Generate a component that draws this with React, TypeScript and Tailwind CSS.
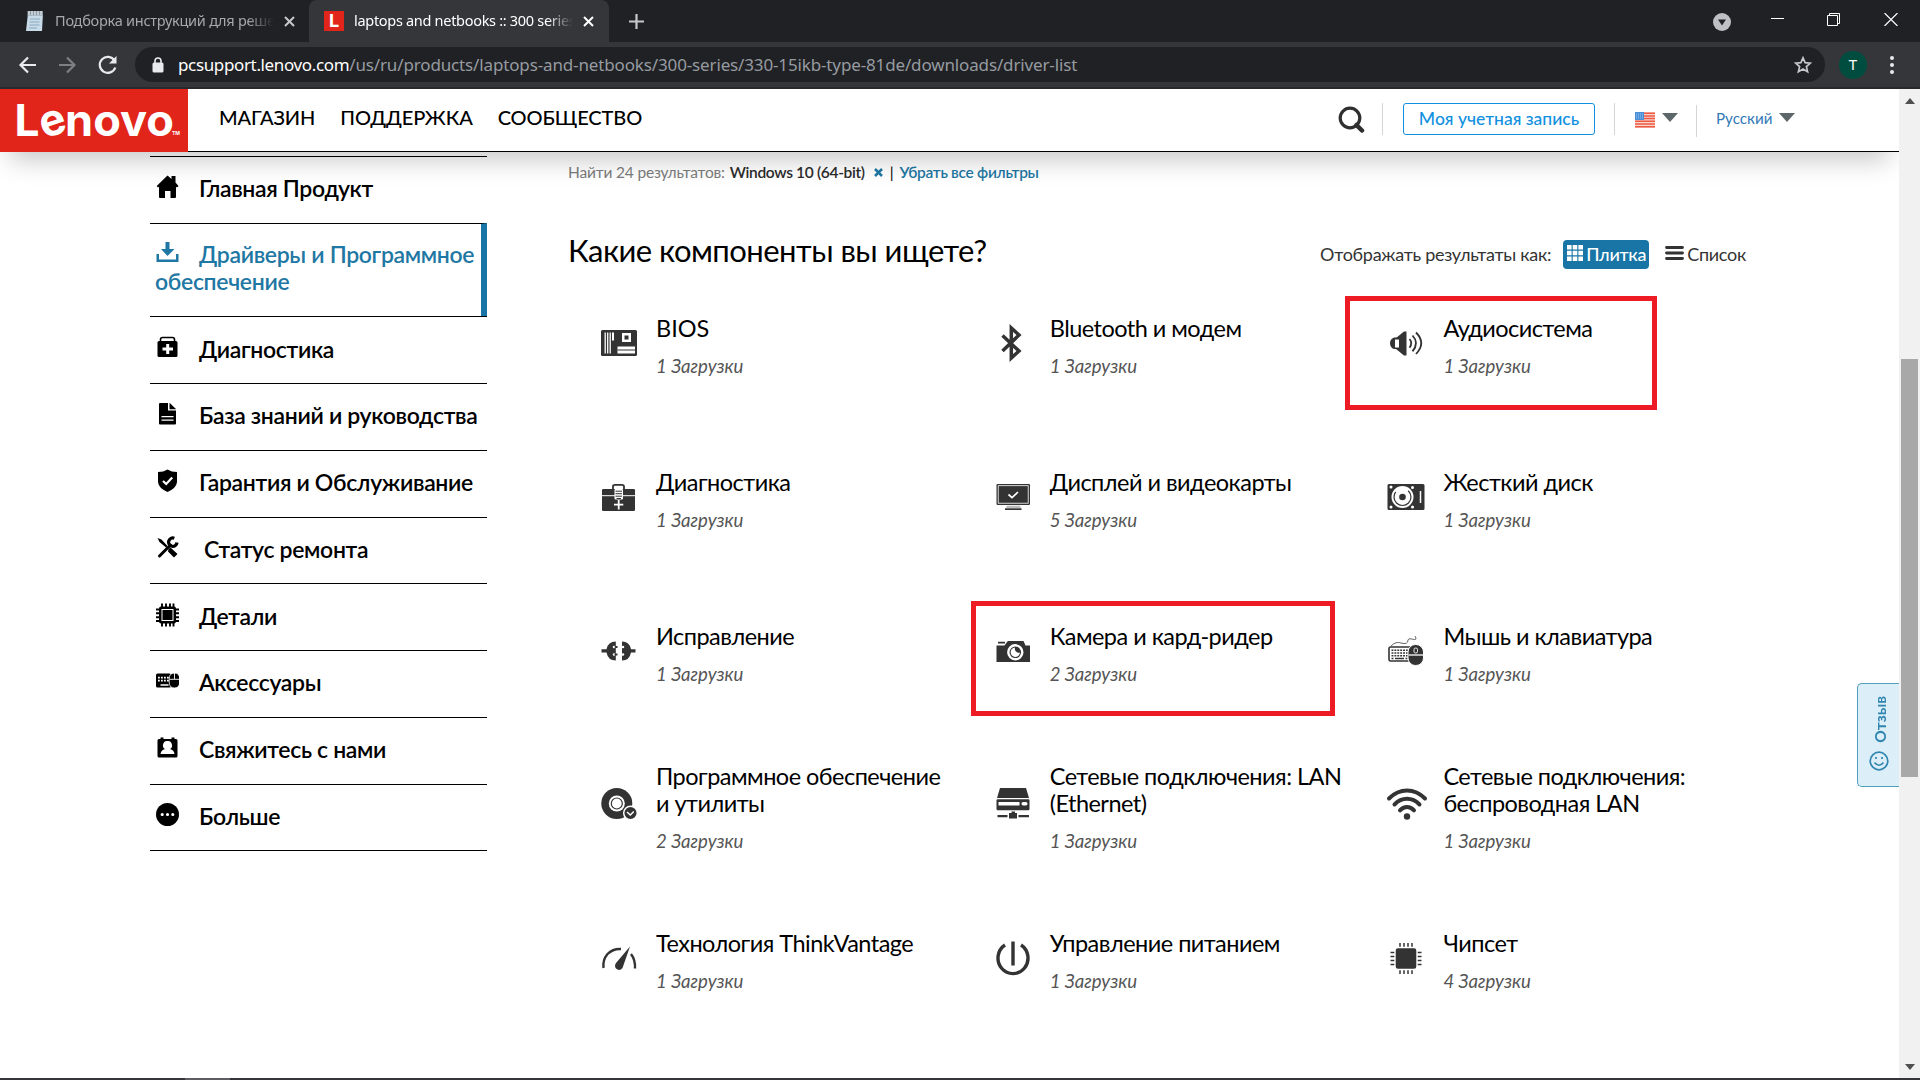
import type { ReactNode } from "react";
import clsx from "clsx";

interface MenuItem {
    label: string;
    icon: ReactNode;
    active?: boolean;
    indent?: boolean;
}

interface Category {
    title: string;
    count: number;
    icon: ReactNode;
    frame?: string;
}

const menu: MenuItem[] = [
    {
        label: "Главная Продукт",
        icon: (
            <path d="M12 0.500 L16 4 V1 H20 V7.500 L23 11 L21.500 12.500 L20.500 11.700 V22 Q20.500 23 19.500 23 H15 V16 H9.500 V23 H4.500 Q3.500 23 3.500 22 V11.700 L2.500 12.500 L1.200 11 Z" />
        ),
    },
    {
        label: "Драйверы и Программное обеспечение",
        active: true,
        icon: (
            <>
                <path d="M10 1 H14 V8 H19 L12 15 L5.500 8 H10 Z" />
                <path d="M1 13 H3.500 V18.500 H20.500 V13 H23 V21 H1 Z" />
            </>
        ),
    },
    {
        label: "Диагностика",
        icon: (
            <>
                <path d="M5 6.500 V3.500 Q5 1.500 7 1.500 H17 Q19 1.500 19 3.500 V6.500" fill="none" stroke="currentColor" strokeWidth="1.6" />
                <rect x="2" y="5" width="20" height="16" rx="1.500" />
                <path d="M10.700 8 H13.700 V11.500 H17.500 V14.500 H13.700 V18 H10.700 V14.500 H7 V11.500 H10.700 Z" fill="#fff" />
            </>
        ),
    },
    {
        label: "База знаний и руководства",
        icon: (
            <>
                <path d="M4.500 1 H12.500 V8.500 H20.500 V21.500 Q20.500 22.500 19.500 22.500 H4.500 Q3.500 22.500 3.500 21.500 V2 Q3.500 1 4.500 1 Z" />
                <path d="M14 0.800 L20.700 7.200 H14 Z" />
                <path d="M6 14.700 H18 M6 18.200 H18" stroke="#fff" strokeWidth="1.200" />
            </>
        ),
    },
    {
        label: "Гарантия и Обслуживание",
        icon: (
            <>
                <path d="M12 0.500 Q16 3 21.500 3 V13 Q21 19 12 23 Q3 19 2.500 13 V3 Q8 3 12 0.500 Z" />
                <path d="M7.500 12 L10.700 15 L16.700 8.500" fill="none" stroke="#fff" strokeWidth="2.200" />
            </>
        ),
    },
    {
        label: "Статус ремонта",
        indent: true,
        icon: (
            <>
                <path d="M2 2 L6 3.500 L12 10 L10.500 11.500 L4 6 Z M13 13 L15 11.500 L22 18 L18.500 21.500 L12.500 15.500 Z" />
                <path d="M4 20 L15 9" stroke="currentColor" strokeWidth="3" strokeLinecap="round" />
                <path d="M18.800 2.200 A4.200 4.200 0 1 0 21.500 6.500" fill="none" stroke="currentColor" strokeWidth="3.200" />
            </>
        ),
    },
    {
        label: "Детали",
        icon: (
            <>
                <path d="M6.500 0.500 V23.500 M10.500 0.500 V23.500 M14.500 0.500 V23.500 M18 0.500 V23.500 M0.500 6.500 H23.500 M0.500 10.300 H23.500 M0.500 14.200 H23.500 M0.500 18 H23.500" stroke="currentColor" strokeWidth="1.900" />
                <rect x="3.500" y="3.500" width="17" height="17" rx="2" />
                <rect x="6.500" y="6.500" width="11" height="11" fill="none" stroke="#fff" strokeWidth="1" />
            </>
        ),
    },
    {
        label: "Аксессуары",
        icon: (
            <>
                <rect x="0.500" y="4.500" width="15" height="14" rx="1.500" />
                <path d="M2.500 8.700 H14.500 M2.500 11.700 H14.500" stroke="#fff" strokeWidth="1.700" strokeDasharray="1.800 1.200" />
                <path d="M5 16 H13" stroke="#fff" strokeWidth="1.500" />
                <path d="M13.700 10 Q13.700 4 19 4 Q24.200 4 24.200 10 V13 Q24.200 19 19 19 Q13.700 19 13.700 13 Z" stroke="#fff" strokeWidth="0.800" />
                <path d="M19 4 V10 M14 10.300 H24" stroke="#fff" strokeWidth="0.900" />
            </>
        ),
    },
    {
        label: "Свяжитесь с нами",
        icon: (
            <>
                <path d="M5 1.500 H8 V3 H16 V1.500 H19 V3 H20.500 Q22 3 22 4.500 V20 Q22 21.500 20.500 21.500 H3.500 Q2 21.500 2 20 V4.500 Q2 3 3.500 3 H5 Z" />
                <path d="M12 5 A4 4.300 0 0 1 14.500 13 Q18.500 14 19 18 H5 Q5.500 14 9.500 13 A4 4.300 0 0 1 12 5 Z" fill="#fff" />
            </>
        ),
    },
    {
        label: "Больше",
        icon: (
            <>
                <circle cx="12" cy="11.500" r="11.500" />
                <path d="M6.700 11.500 h0.010 M12 11.500 h0.010 M17.300 11.500 h0.010" stroke="#fff" strokeWidth="3.200" strokeLinecap="round" />
            </>
        ),
    },
];

const categories: Category[] = [
    {
        title: "BIOS",
        count: 1,
        icon: (
            <>
                <rect x="2" y="7" width="36" height="26" rx="1.500" />
                <path d="M6.200 9.500 V30.500 M8.700 9.500 V30.500 M11.200 9.500 V30.500" stroke="#fff" strokeWidth="1.300" />
                <path d="M13 9.500 h2 v8 h-2 z M23 10 h9 v9 h-9 z M18.500 23.500 h17.500 v7 h-17.500 z" fill="#fff" />
                <path d="M25.500 12.500 h4 v4 h-4 z" />
                <path d="M18.500 27 h17.500" stroke="#333" strokeWidth="1" />
            </>
        ),
    },
    {
        title: "Bluetooth и модем",
        count: 1,
        icon: <path d="M9.500 12.500 L26 28 L18.300 35 V5 L26 12 L9.500 28" fill="none" stroke="#333" strokeWidth="3.500" />,
    },
    {
        title: "Аудиосистема",
        count: 1,
        frame: "left-[-23px] top-[25px] w-[312px] h-[114px]",
        icon: (
            <>
                <path d="M20.500 8.500 V32.500 H18 L10 26 V15 L18 8.500 Z" />
                <path d="M8 14.500 H13.500 V26 H8 Q4 24.500 4 20.200 Q4 16 8 14.500 Z" />
                <path d="M9 16.500 H13 V24.500 H9 Z" fill="#fff" />
                <path d="M23.500 16 Q27 20 23.500 24.700 M26.500 12.500 Q33.500 20 26.500 28.300 M30 9.500 Q40.500 20 30 31" fill="none" stroke="#333" strokeWidth="1.800" />
            </>
        ),
    },
    {
        title: "Диагностика",
        count: 1,
        icon: (
            <>
                <path d="M14 12 V9.500 Q14 7.800 16 7.800 H23 Q25 7.800 25 9.500 V12" fill="none" stroke="#333" strokeWidth="1.800" />
                <rect x="3" y="12" width="33" height="22" rx="1.300" />
                <path d="M3 18.700 H36" stroke="#fff" strokeWidth="1" />
                <rect x="15.500" y="12" width="8.500" height="10.500" rx="1" fill="#fff" />
                <path d="M16.500 14.200 H23 M16.500 16.700 H23 M16.500 19.200 H23 M17.500 21.500 H22" stroke="#333" strokeWidth="1" />
                <path d="M19.700 23 V32.500 M15 27.700 H24.300" stroke="#fff" strokeWidth="1.800" />
            </>
        ),
    },
    {
        title: "Дисплей и видеокарты",
        count: 5,
        icon: (
            <>
                <rect x="3.500" y="7" width="33.500" height="21" rx="1.200" />
                <rect x="5.200" y="8.700" width="30" height="17.500" fill="none" stroke="#fff" strokeWidth="0.800" />
                <path d="M15.500 17.500 L19 20.700 L25 15" fill="none" stroke="#fff" strokeWidth="1.700" />
                <path d="M14 28.700 H27 L28 31 H13 Z" fill="#bbb" />
                <path d="M12 31.300 H28.500 V33 H12 Z" />
            </>
        ),
    },
    {
        title: "Жесткий диск",
        count: 1,
        icon: (
            <>
                <rect x="1.500" y="7" width="37" height="26" rx="1.500" />
                <circle cx="16.500" cy="20" r="11" fill="#fff" />
                <circle cx="16.500" cy="20" r="8.500" fill="none" stroke="#333" strokeWidth="1.200" strokeDasharray="40 14" strokeDashoffset="8" />
                <circle cx="16.500" cy="20" r="3.300" />
                <path d="M34.500 14 V26" stroke="#fff" strokeWidth="1.500" />
                <path d="M5 10 h.01 M5 30 h.01 M26.500 10.500 h.01 M26.500 30 h.01" stroke="#fff" strokeWidth="3" strokeLinecap="round" />
            </>
        ),
    },
    {
        title: "Исправление",
        count: 1,
        icon: (
            <>
                <path d="M2.500 18.200 H7.500 Q9 10.500 16.800 10.500 V29.500 Q9 29.500 7.500 21.500 H2.500 Z" />
                <path d="M36.500 18.200 H32 Q30.500 10.500 23 10.500 V29.500 Q30.500 29.500 32 21.500 H36.500 Z" />
                <path d="M15.500 16 h3 M15.500 23.500 h3" stroke="#333" strokeWidth="1.800" />
                <path d="M15 16 h.01 M15 23.500 h.01 M24 16 h.01 M24 23.500 h.01" stroke="#fff" strokeWidth="2.600" strokeLinecap="round" />
                <path d="M15.500 16 h2 M15.500 23.500 h2" stroke="#333" strokeWidth="1.200" />
            </>
        ),
    },
    {
        title: "Камера и кард-ридер",
        count: 2,
        frame: "left-[-4px] top-[23px] w-[364px] h-[115px]",
        icon: (
            <>
                <path d="M5 10.800 H12 V12.600 H5 Z M14.800 10 H30.500 L32.500 14.500 H37 V31 H3.500 V14.500 H11.500 Z" />
                <circle cx="22.300" cy="21.300" r="7" fill="none" stroke="#fff" strokeWidth="2.400" />
                <path d="M22 16.500 A4.700 4.700 0 1 0 27 21.500 A4 4 0 0 1 22 16.500 Z" fill="#fff" />
            </>
        ),
    },
    {
        title: "Мышь и клавиатура",
        count: 1,
        icon: (
            <>
                <rect x="3" y="16" width="26" height="14" rx="1.500" fill="#fff" stroke="#333" strokeWidth="1.600" />
                <path d="M5.500 19.200 H22 M5.500 22 H22 M5.500 24.800 H22" stroke="#333" strokeWidth="1.500" strokeDasharray="1.900 1" />
                <path d="M5.500 27.500 h2 M9 27.500 h9 M19.500 27.500 h2" stroke="#333" strokeWidth="1.500" />
                <path d="M5 15 Q10 10 15 12 Q22 14 22 9 Q22 7 26 8 Q32 10 29 5" fill="none" stroke="#555" strokeWidth="0.900" />
                <rect x="22" y="13.500" width="15.500" height="21" rx="7.500" stroke="#fff" strokeWidth="1" />
                <path d="M22.500 24 H37" stroke="#fff" strokeWidth="1.300" />
                <rect x="28" y="17" width="3.500" height="5" rx="1.500" fill="none" stroke="#fff" strokeWidth="0.900" />
            </>
        ),
    },
    {
        title: "Программное обеспечение\nи утилиты",
        count: 2,
        icon: (
            <>
                <circle cx="17.800" cy="19.500" r="15.500" />
                <circle cx="17.800" cy="19.500" r="8" fill="#fff" />
                <circle cx="17.800" cy="19.500" r="5.500" fill="none" stroke="#333" strokeWidth="1.200" />
                <circle cx="31.500" cy="29" r="6.800" stroke="#fff" strokeWidth="1.500" />
                <path d="M28 28 L31.300 31 L34.800 27.500" fill="none" stroke="#fff" strokeWidth="1.500" />
            </>
        ),
    },
    {
        title: "Сетевые подключения: LAN\n(Ethernet)",
        count: 1,
        icon: (
            <>
                <path d="M7 4 H33 L36 14 H4 Z" />
                <rect x="3.500" y="15.200" width="33" height="11" rx="1.200" />
                <path d="M5.500 18 H26.500 V21.500 H5.500 Z" fill="#fff" />
                <rect x="28.500" y="18" width="6" height="3.500" rx="1.700" fill="#fff" />
                <path d="M18.500 27.500 H22 V29 H24 V34.500 H16 V29 H18.500 Z M4.500 31 H14.500 V33.300 H4.500 Z M25.500 31 H36 V33.300 H25.500 Z" />
            </>
        ),
    },
    {
        title: "Сетевые подключения:\nбеспроводная LAN",
        count: 1,
        icon: (
            <g transform="translate(1 0)">
                <path d="M2 14.500 Q10 6.500 20 6.500 Q30 6.500 38 14.500 M7.500 20.500 Q13 14.800 20 14.800 Q27 14.800 32.500 20.500 M13 26.300 Q16 23 20 23 Q24 23 27 26.300" fill="none" stroke="#333" strokeWidth="4" strokeLinecap="round" />
                <circle cx="20" cy="32.500" r="3.200" />
            </g>
        ),
    },
    {
        title: "Технология ThinkVantage",
        count: 1,
        icon: (
            <>
                <path d="M4.500 30 Q3.500 22 8.500 16 Q14 10.500 22 11" fill="none" stroke="#333" strokeWidth="2.400" />
                <path d="M32 16 Q36.500 22 36 30.500" fill="none" stroke="#333" strokeWidth="2.400" />
                <path d="M31 8.500 L23.500 30 Q20.500 33.500 17 30.500 Q15 28 17 25 Z" />
            </>
        ),
    },
    {
        title: "Управление питанием",
        count: 1,
        icon: <path d="M20 3.500 V27.500 M12 7 A15 15.500 0 1 0 28 7" fill="none" stroke="#333" strokeWidth="3.400" />,
    },
    {
        title: "Чипсет",
        count: 4,
        icon: (
            <>
                <path d="M14 5 V36 M18 5 V36 M22 5 V36 M26 5 V36 M4.500 14.500 H35.500 M4.500 18.500 H35.500 M4.500 22.500 H35.500 M4.500 26.500 H35.500" stroke="#333" strokeWidth="1.500" />
                <rect x="9" y="9.500" width="22" height="22" rx="3" stroke="#fff" strokeWidth="1.400" />
            </>
        ),
    },
];

function Tab({ title, icon, active }: { title: string; icon: ReactNode; active?: boolean }) {
    return (
        <div className={clsx("relative flex h-[42px] w-[300px] items-center pl-[15px]", active ? "rounded-t-lg bg-[#35363a] text-white" : "text-[#a5a8ac]")}>
            <div className="w-[20px] shrink-0">{icon}</div>
            <div
                className={clsx(
                    "ml-[10px] w-[219px] overflow-hidden whitespace-nowrap font-['Noto_Sans',sans-serif] text-[14.5px] [mask-image:linear-gradient(to_right,black_88%,transparent)]",
                    active ? "tracking-[-0.3px]" : "tracking-[-0.25px]",
                )}
            >
                {title}
            </div>
            <svg className={clsx("ml-[10px] size-[11px] shrink-0", active ? "text-white" : "text-[#c6c8cb]")} viewBox="0 0 11 11" stroke="currentColor" strokeWidth="2">
                <path d="M1 1 L10 10 M10 1 L1 10" />
            </svg>
        </div>
    );
}

function BrowserChrome() {
    return (
        <div className="shrink-0 border-b-2 border-[#28292c] bg-[#35363a]">
            <div className="flex h-[42px] items-center bg-[#202124]">
                <div className="ml-[10px] flex w-[299px]">
                    <Tab
                        title="Подборка инструкций для решен"
                        icon={
                            <svg width="20" height="22" viewBox="0 0 20 22">
                                <path d="M3 3 H18 L17 21 H1 Z" fill="#c7dbe8" />
                                <path d="M2.500 1 H18 V5.500 H2.500 Z" fill="#8d9ba6" />
                                <path d="M4 1 V5 M7 1 V5 M10 1 V5 M13 1 V5 M16 1 V5" stroke="#e8edf0" strokeWidth="1.200" />
                                <path d="M5 9 H15 M4.500 12 H14.500 M4.500 15 H14.500 M4 18 H12" stroke="#8bacc2" strokeWidth="1.200" />
                            </svg>
                        }
                    />
                </div>
                <Tab
                    active
                    title="laptops and netbooks :: 300 series"
                    icon={
                        <div className="flex size-[20px] items-center justify-center bg-[#e1251b] font-['Inter',sans-serif] text-[18px] leading-none font-bold text-white">L</div>
                    }
                />
                <svg className="ml-[20px] size-[15px]" viewBox="0 0 15 15" stroke="#c6c8cb" strokeWidth="2.200">
                    <path d="M7.500 0 V15 M0 7.500 H15" />
                </svg>
                <div className="ml-auto flex items-center text-white">
                    <svg width="18" height="18" viewBox="0 0 18 18" className="mt-[2px] mr-[40px]">
                        <circle cx="9" cy="9" r="9" fill="#bdc1c6" />
                        <path d="M5 6.500 H13 L9 12.500 Z" fill="#202124" />
                    </svg>
                    <svg width="13" height="13" viewBox="0 0 13 13" className="mr-[43px] mb-[4px]" stroke="currentColor">
                        <path d="M0 5.500 H13" />
                    </svg>
                    <svg width="13" height="13" viewBox="0 0 13 13" className="mr-[44px] mb-[4px]" stroke="currentColor" fill="none">
                        <path d="M0.500 2.500 H10.500 V12.500 H0.500 Z M2.500 2.500 V0.500 H12.500 V10.500 H10.500" />
                    </svg>
                    <svg width="14" height="13" viewBox="0 0 14 13" className="mr-[22px] mb-[4px]" stroke="currentColor" strokeWidth="1.200">
                        <path d="M0.500 0 L13.500 13 M13.500 0 L0.500 13" />
                    </svg>
                </div>
            </div>
            <div className="flex h-[45px] items-center">
                <svg width="124" height="24" viewBox="0 0 124 24" className="mr-[11px] shrink-0" fill="none" strokeWidth="2.200">
                    <path d="M36 12 H21 M28 4.500 L20.500 12 L28 19.500" stroke="#e8eaed" />
                    <path d="M59 12 H74 M67 4.500 L74.500 12 L67 19.500" stroke="#7d7f82" />
                    <path d="M114.500 7.500 A8 8 0 1 0 115.300 14.500" stroke="#e8eaed" />
                    <path d="M116.500 3 V10.500 H109 Z" fill="#e8eaed" />
                </svg>
                <div className="flex h-[35px] w-[1690px] items-center rounded-full bg-[#202124] pl-[17px] font-['Noto_Sans',sans-serif] text-[17px] text-[#969ba1]">
                    <svg width="12" height="16" viewBox="0 0 12 16" className="mr-[14px]">
                        <rect x="0.500" y="5.500" width="11" height="10" rx="1.500" fill="#e8eaed" />
                        <path d="M3 6 V4 A3 3 0 0 1 9 4 V6" fill="none" stroke="#e8eaed" strokeWidth="1.600" />
                    </svg>
                    <span className="tracking-[-0.140px] whitespace-nowrap">
                        <span className="tracking-[-0.360px] text-white">pcsupport.lenovo.com</span>
                        /us/ru/products/laptops-and-netbooks/300-series/330-15ikb-type-81de/downloads/driver-list
                    </span>
                    <svg width="18" height="18" viewBox="0 0 18 18" className="mr-[13px] ml-auto" fill="none" stroke="#c6c8cb" strokeWidth="1.700">
                        <path d="M9 1.800 L11.100 6.600 L16.400 7.100 L12.400 10.600 L13.600 15.800 L9 13 L4.400 15.800 L5.600 10.600 L1.600 7.100 L6.900 6.600 Z" />
                    </svg>
                </div>
                <div className="ml-[14px] flex size-7 items-center justify-center rounded-full bg-[#004d40] font-['Noto_Sans',sans-serif] text-[15px] text-white">T</div>
                <div className="ml-[23px] flex flex-col gap-[3px]">
                    <span className="size-1 rounded-full bg-[#e8eaed]" />
                    <span className="size-1 rounded-full bg-[#e8eaed]" />
                    <span className="size-1 rounded-full bg-[#e8eaed]" />
                </div>
            </div>
        </div>
    );
}

function Caret() {
    return (
        <svg width="16" height="9" viewBox="0 0 16 9" fill="#5d6769" className="mb-[3px]">
            <path d="M0 0 H16 L8 9 Z" />
        </svg>
    );
}

function SiteHeader() {
    return (
        <header className="relative z-10 flex h-[63px] shrink-0 items-center border-b border-black bg-white shadow-[0_18px_26px_-10px_rgba(0,0,0,0.22)]">
            <svg width="188" height="63" viewBox="0 0 188 63" className="mb-[-1px] shrink-0 bg-[#e1251b] font-['Inter',sans-serif] text-[44px] font-bold" fill="#fff">
                <text x="14.500" y="46.500" textLength="25" lengthAdjust="spacingAndGlyphs">L</text>
                <text x="39.500" y="46.500" transform="rotate(-18 52 34)">e</text>
                <text x="65" y="46.500" textLength="109" lengthAdjust="spacingAndGlyphs">novo</text>
                <text x="172" y="45.500" className="text-[5px]">TM</text>
            </svg>
            <nav className="mb-[7px] ml-[31px] flex gap-[25px] text-[20px] font-medium tracking-[-0.100px] whitespace-nowrap text-black">
                <span>МАГАЗИН</span>
                <span>ПОДДЕРЖКА</span>
                <span>СООБЩЕСТВО</span>
            </nav>
            <div className="mb-[2px] ml-auto flex items-center">
                <svg width="27" height="27" viewBox="0 0 27 27" fill="none" stroke="#2f2f2f">
                    <circle cx="12" cy="12" r="9.800" strokeWidth="3.200" />
                    <path d="M18.500 19 L24 24.500" strokeWidth="4.500" strokeLinecap="round" />
                </svg>
                <span className="ml-[17px] h-8 w-px bg-[#d5d5d5]" />
                <span className="ml-[20px] flex h-8 w-[192px] items-center justify-center rounded-[3px] border border-[#1290e0] text-[17.500px] font-medium whitespace-nowrap text-[#1290e0]">
                    Моя учетная запись
                </span>
                <span className="ml-[19px] h-8 w-px bg-[#d5d5d5]" />
                <svg width="20" height="16" viewBox="0 0 20 16" className="mt-[2px] mr-[7px] ml-[20px]">
                    <rect width="20" height="16" fill="#f7d5cf" />
                    <path d="M0 1.200 H20 M0 3.900 H20 M0 6.600 H20 M0 9.300 H20 M0 12 H20 M0 14.700 H20" stroke="#ee5a43" strokeWidth="1.500" />
                    <rect width="9" height="8" fill="#4a90d9" />
                    <path d="M1 2 H8 M1 4 H8 M1 6 H8" stroke="#a9cdf0" strokeWidth="0.800" strokeDasharray="1 1" />
                </svg>
                <Caret />
                <span className="mt-[3px] ml-[18px] h-8 w-px bg-[#d5d5d5]" />
                <span className="mr-[9px] mb-px ml-[19px] w-[54px] text-[15.200px] whitespace-nowrap text-[#337ab7]">Русский</span>
                <Caret />
            </div>
            <div className="w-[104px]" />
        </header>
    );
}

function Sidebar() {
    return (
        <nav className="mt-[4px] h-[695px] w-[337px] shrink-0 border-b border-black">
            {menu.map((item) => (
                <div
                    key={item.label}
                    className={clsx(
                        "border-t border-black pl-[5px] text-[23px] leading-[27px] font-semibold tracking-[-0.330px]",
                        item.active ? "h-[93.500px] border-r-[6px] border-r-[#1875a5] pt-[17px] text-[#1f78a4]" : "h-[66.750px] pt-[18.300px] text-black",
                    )}
                >
                    <svg viewBox="0 0 24 24" fill="currentColor" className={clsx("inline-block size-6 align-[-2px]", item.indent ? "mr-[25px]" : "mr-[20px]")}>
                        <g transform="translate(0.500 0)">{item.icon}</g>
                    </svg>
                    {item.label}
                </div>
            ))}
        </nav>
    );
}

function ResultsBar() {
    return (
        <div className="ml-[-13px]">
            <p className="flex items-center pt-[10px] text-[15.500px] leading-5 tracking-[-0.170px] whitespace-nowrap text-[#7c7c7c]">
                Найти 24 результатов:
                <b className="ml-[5px] font-semibold tracking-[-0.330px] text-[#2b2b2b]">Windows 10 (64-bit)</b>
                <svg width="9" height="9" viewBox="0 0 9 9" className="mt-px ml-[9px]" stroke="#1f78a4" strokeWidth="2.500">
                    <path d="M1 1 L8 8 M8 1 L1 8" />
                </svg>
                <span className="ml-[7px] text-black">|</span>
                <b className="ml-[6px] font-semibold tracking-[-0.300px] text-[#1f78a4]">Убрать все фильтры</b>
            </p>
            <div className="mt-[48px] flex h-[40px] items-center">
                <h2 className="text-[31px] tracking-[-0.520px] whitespace-nowrap text-black">Какие компоненты вы ищете?</h2>
                <div className="mt-[9px] mr-[153px] ml-auto flex items-center text-[18px] tracking-[-0.280px] whitespace-nowrap text-[#333]">
                    Отображать результаты как:
                    <span className="ml-[12px] flex h-[29px] w-[86px] items-center rounded-[4px] bg-[#1875a5] pl-1 font-medium text-white">
                        <svg width="16" height="16" viewBox="0 0 16 16" fill="#fff" className="mr-[3px] mb-1">
                            <path d="M0 0h4.600v4.600H0z M5.700 0h4.600v4.600H5.700z M11.400 0H16v4.600h-4.600z M0 5.700h4.600v4.600H0z M5.700 5.700h4.600v4.600H5.700z M11.400 5.700H16v4.600h-4.600z M0 11.400h4.600V16H0z M5.700 11.400h4.600V16H5.700z M11.400 11.400H16V16h-4.600z" />
                        </svg>
                        Плитка
                    </span>
                    <svg width="19" height="14" viewBox="0 0 19 14" className="mr-[3px] mb-1 ml-[16px]" stroke="#333" strokeWidth="2.800" strokeLinecap="round">
                        <path d="M1.500 1.500 H17.500 M1.500 7 H17.500 M1.500 12.500 H17.500" />
                    </svg>
                    Список
                </div>
            </div>
        </div>
    );
}

function CategoryCard({ title, count, icon, frame }: Category) {
    // all-latin names keep the font's own spacing
    const latin = /^[A-Z]+$/.test(title);

    return (
        <div className="relative flex items-center">
            <svg viewBox="0 0 40 40" fill="#333" className="mr-[17px] mb-[9px] ml-[18px] size-10 shrink-0 overflow-visible">
                {icon}
            </svg>
            <div>
                <h3 className={clsx("text-[23.500px] leading-[27px] whitespace-pre text-black", !latin && "tracking-[-0.520px]")}>{title}</h3>
                <p className="mt-[11px] mb-px text-[18.600px] leading-[26px] text-[#555] italic">{count} Загрузки</p>
            </div>
            {frame && <div className={clsx("absolute border-[5px] border-[#ed1c24]", frame)} />}
        </div>
    );
}

function Scrollbar() {
    return (
        <div className="flex w-[21px] flex-col items-center bg-[#f1f1f1]">
            <svg width="10" height="6" viewBox="0 0 10 6" className="mt-[9px]" fill="#505050">
                <path d="M0 6 L5 0 L10 6 Z" />
            </svg>
            <div className="mt-[255px] h-[418px] w-[17px] bg-[#a8a8a8]" />
            <svg width="10" height="6" viewBox="0 0 10 6" className="mt-auto mb-[8px]" fill="#505050">
                <path d="M0 0 L5 6 L10 0 Z" />
            </svg>
        </div>
    );
}

export default function App() {
    return (
        <div className="flex h-[1080px] w-[1920px] flex-col overflow-hidden bg-white font-['Lato',sans-serif]">
            <BrowserChrome />
            <div className="flex min-h-0 flex-1">
                <div className="relative flex w-[1899px] flex-col overflow-hidden">
                    <SiteHeader />
                    <div className="flex flex-1 pl-[150px]">
                        <Sidebar />
                        <main className="ml-[94px] flex-1">
                            <ResultsBar />
                            <div className="mt-px grid auto-rows-[153.700px] grid-cols-[393.700px_393.700px_393.700px]">
                                {categories.map((category) => (
                                    <CategoryCard key={category.title} {...category} />
                                ))}
                            </div>
                        </main>
                    </div>
                    <div className="absolute top-[594px] right-0 z-20 flex h-[104px] w-[42px] flex-col items-center justify-between rounded-l-[5px] border border-r-0 border-[#4fa0bd] bg-[#dceef7] pt-[12px] pb-[15px]">
                        <span className="mr-[-3px] rotate-180 text-[15.500px] leading-[20px] font-bold text-[#3287b2] [writing-mode:vertical-rl]">Отзыв</span>
                        <svg width="20" height="20" viewBox="0 0 20 20" fill="none" stroke="#3287b2" strokeWidth="1.700">
                            <circle cx="10" cy="10" r="8.800" />
                            <path d="M5.500 11.500 Q10 17 14.500 11.500 M7 6 V8 M13 6 V8" />
                        </svg>
                    </div>
                </div>
                <Scrollbar />
            </div>
            <div className="h-[2px] shrink-0 bg-[#35363a] pl-[185px]">
                <div className="h-full w-[45px] bg-[#5d5e61]" />
            </div>
        </div>
    );
}
